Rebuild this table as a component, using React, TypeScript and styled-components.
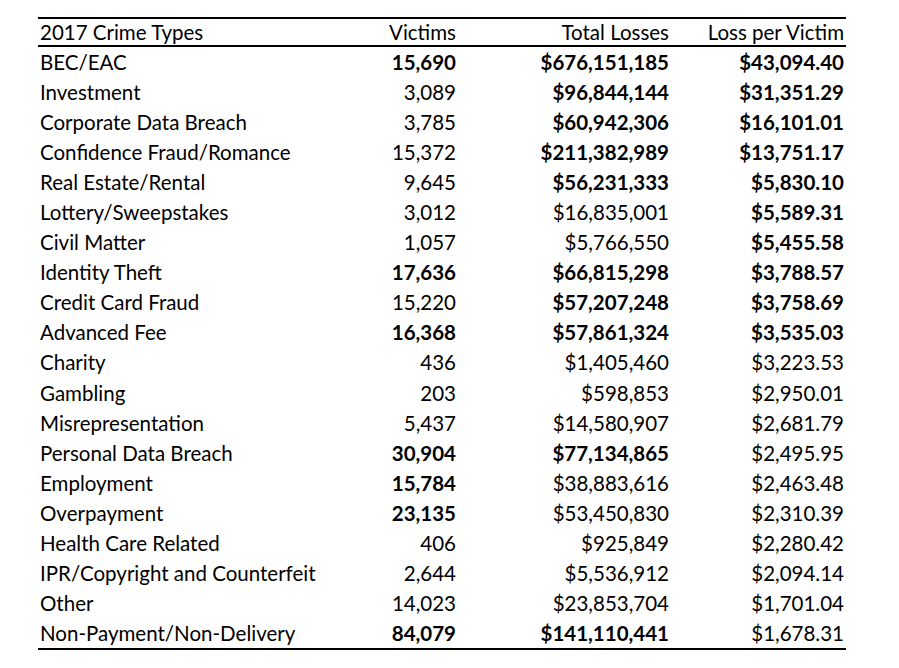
import React from "react";
import styled, { createGlobalStyle } from "styled-components";

const Global = createGlobalStyle`
  html, body { margin: 0; padding: 0; background: #ffffff; }
  body { font-family: Lato, "Open Sans", "Liberation Sans", sans-serif; color: #000; }
`;

const Page = styled.div`
  padding: 17px 0 0 38px;
`;

const Table = styled.div`
  width: 808px;
  border-top: 2px solid #000;
  border-bottom: 2px solid #000;
  font-size: 20.5px;
  display: flex;
  flex-direction: column;
`;

const HeadRow = styled.div`
  display: grid;
  grid-template-columns: 320px 100px 213px 175px;
  height: 28px;
  box-sizing: border-box;
  border-bottom: 2px solid #000;
  line-height: 26px;
`;

const BodyRow = styled.div`
  display: grid;
  grid-template-columns: 320px 100px 213px 175px;
  height: 30.05px;
  line-height: 31px;
`;

const Cell = styled.div<{ $align?: "left" | "right"; $bold?: boolean }>`
  padding: 0 2px;
  text-align: ${(p) => p.$align ?? "right"};
  font-weight: ${(p) => (p.$bold ? 700 : 400)};
  white-space: nowrap;
`;

type Row = [string, string, boolean, string, boolean, string, boolean];

const rows: Row[] = [
  ["BEC/EAC", "15,690", true, "$676,151,185", true, "$43,094.40", true],
  ["Investment", "3,089", false, "$96,844,144", true, "$31,351.29", true],
  ["Corporate Data Breach", "3,785", false, "$60,942,306", true, "$16,101.01", true],
  ["Confidence Fraud/Romance", "15,372", false, "$211,382,989", true, "$13,751.17", true],
  ["Real Estate/Rental", "9,645", false, "$56,231,333", true, "$5,830.10", true],
  ["Lottery/Sweepstakes", "3,012", false, "$16,835,001", false, "$5,589.31", true],
  ["Civil Matter", "1,057", false, "$5,766,550", false, "$5,455.58", true],
  ["Identity Theft", "17,636", true, "$66,815,298", true, "$3,788.57", true],
  ["Credit Card Fraud", "15,220", false, "$57,207,248", true, "$3,758.69", true],
  ["Advanced Fee", "16,368", true, "$57,861,324", true, "$3,535.03", true],
  ["Charity", "436", false, "$1,405,460", false, "$3,223.53", false],
  ["Gambling", "203", false, "$598,853", false, "$2,950.01", false],
  ["Misrepresentation", "5,437", false, "$14,580,907", false, "$2,681.79", false],
  ["Personal Data Breach", "30,904", true, "$77,134,865", true, "$2,495.95", false],
  ["Employment", "15,784", true, "$38,883,616", false, "$2,463.48", false],
  ["Overpayment", "23,135", true, "$53,450,830", false, "$2,310.39", false],
  ["Health Care Related", "406", false, "$925,849", false, "$2,280.42", false],
  ["IPR/Copyright and Counterfeit", "2,644", false, "$5,536,912", false, "$2,094.14", false],
  ["Other", "14,023", false, "$23,853,704", false, "$1,701.04", false],
  ["Non-Payment/Non-Delivery", "84,079", true, "$141,110,441", true, "$1,678.31", false],
];

export default function App() {
  return (
    <Page>
      <Global />
      <Table>
        <HeadRow>
          <Cell $align="left">2017 Crime Types</Cell>
          <Cell>Victims</Cell>
          <Cell>Total Losses</Cell>
          <Cell>Loss per Victim</Cell>
        </HeadRow>
        {rows.map((r) => (
          <BodyRow key={r[0]}>
            <Cell $align="left">{r[0]}</Cell>
            <Cell $bold={r[2]}>{r[1]}</Cell>
            <Cell $bold={r[4]}>{r[3]}</Cell>
            <Cell $bold={r[6]}>{r[5]}</Cell>
          </BodyRow>
        ))}
      </Table>
    </Page>
  );
}
